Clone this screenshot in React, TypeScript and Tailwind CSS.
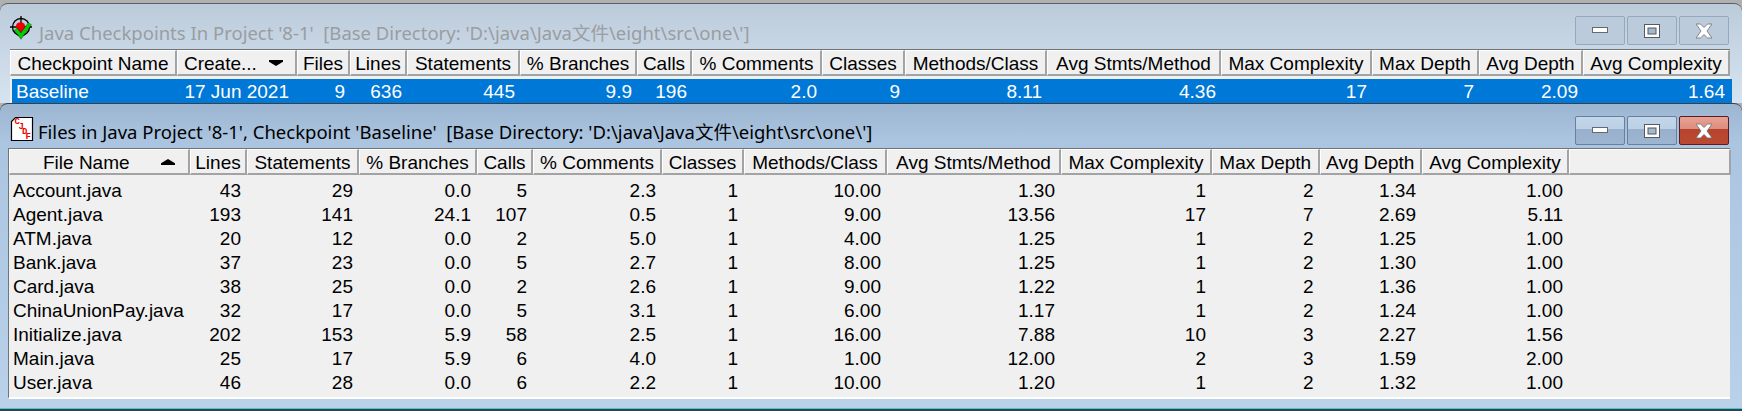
// Java checkpoint metrics windows
const cpCols = 'grid-cols-[167px_120px_53px_57px_113px_117px_55px_130px_83px_142px_174px_151px_107px_104px_147px]';
const fileCols = 'grid-cols-[181px_57px_112px_118px_56px_129px_82px_143px_174px_151px_107.5px_102.5px_147px_162px]';

const cpHeaders = ['Checkpoint Name', 'Create...', 'Files', 'Lines', 'Statements', '% Branches', 'Calls', '% Comments', 'Classes', 'Methods/Class', 'Avg Stmts/Method', 'Max Complexity', 'Max Depth', 'Avg Depth', 'Avg Complexity'];
const cpRow = ['Baseline', '17 Jun 2021', '9', '636', '445', '9.9', '196', '2.0', '9', '8.11', '4.36', '17', '7', '2.09', '1.64'];

const fileHeaders = ['File Name', 'Lines', 'Statements', '% Branches', 'Calls', '% Comments', 'Classes', 'Methods/Class', 'Avg Stmts/Method', 'Max Complexity', 'Max Depth', 'Avg Depth', 'Avg Complexity', ''];
const fileRows = [
  ['Account.java', '43', '29', '0.0', '5', '2.3', '1', '10.00', '1.30', '1', '2', '1.34', '1.00'],
  ['Agent.java', '193', '141', '24.1', '107', '0.5', '1', '9.00', '13.56', '17', '7', '2.69', '5.11'],
  ['ATM.java', '20', '12', '0.0', '2', '5.0', '1', '4.00', '1.25', '1', '2', '1.25', '1.00'],
  ['Bank.java', '37', '23', '0.0', '5', '2.7', '1', '8.00', '1.25', '1', '2', '1.30', '1.00'],
  ['Card.java', '38', '25', '0.0', '2', '2.6', '1', '9.00', '1.22', '1', '2', '1.36', '1.00'],
  ['ChinaUnionPay.java', '32', '17', '0.0', '5', '3.1', '1', '6.00', '1.17', '1', '2', '1.24', '1.00'],
  ['Initialize.java', '202', '153', '5.9', '58', '2.5', '1', '16.00', '7.88', '10', '3', '2.27', '1.56'],
  ['Main.java', '25', '17', '5.9', '6', '4.0', '1', '1.00', '12.00', '2', '3', '1.59', '2.00'],
  ['User.java', '46', '28', '0.0', '6', '2.2', '1', '10.00', '1.20', '1', '2', '1.32', '1.00'],
];

function TargetIcon() {
  return (
    <svg width="24" height="26" viewBox="0 0 24 26" className="shrink-0">
      <circle cx="11" cy="11" r="8.5" fill="none" stroke="#000" strokeWidth="1.3" />
      <path d="M11 0V22M0 11H22" stroke="#000" strokeWidth="1.3" />
      <circle cx="10.5" cy="11" r="4.8" fill="#f00000" />
      <path d="M5.5 13L11 20L20 7.5" fill="none" stroke="#000" strokeWidth="4.6" strokeOpacity="0.55" />
      <path d="M5.5 13L11 20L20 7.5" fill="none" stroke="#00d000" strokeWidth="3.4" />
    </svg>
  );
}

function FileIcon() {
  return (
    <svg width="24" height="26" viewBox="0 0 24 26" className="shrink-0">
      <path d="M5.5 1.5H22.5V24.5H1.5V5.5Z" fill="#fff" stroke="#000" strokeWidth="1.2" />
      <g fill="#f00000" fontFamily="'Liberation Mono',monospace" fontSize="9" fontWeight="700">
        <text x="4.5" y="8">C</text>
        <text x="8.5" y="13">J</text>
        <text x="12" y="18">D</text>
        <text x="15.5" y="23">F</text>
      </g>
    </svg>
  );
}

function WinGlyph({ kind }: { kind: 'min' | 'max' | 'close' }) {
  if (kind === 'min') {
    return (
      <svg width="18" height="9" viewBox="0 0 18 9">
        <rect x="1.5" y="1.5" width="15" height="5" fill="#fff" stroke="#666a70" />
      </svg>
    );
  }
  if (kind === 'max') {
    return (
      <svg width="18" height="16" viewBox="0 0 18 16">
        <rect x="1.5" y="1.5" width="15" height="13" fill="#fff" stroke="#555a60" />
        <rect x="5" y="5" width="8" height="6" fill="#a5b8cd" stroke="#555a60" />
      </svg>
    );
  }
  return (
    <svg width="18" height="16" viewBox="0 0 18 16">
      <path d="M1 1H5.5L9 4.5L12.5 1H17L12 8L17 15H12.5L9 11.5L5.5 15H1L6 8Z" fill="#fff" stroke="#6c7076" strokeWidth="0.8" />
    </svg>
  );
}

function Buttons({ active }: { active: boolean }) {
  const base = 'h-[29px] flex items-center justify-center rounded-[2px] border';
  const plain = active
    ? 'border-[#67809f] bg-[linear-gradient(#c3d6ea_0%,#bcd0e6_45%,#98b0cc_46%,#9db5d0_100%)]'
    : 'border-[#94a8c0] bg-[#bccbdc]';
  const close = active
    ? 'border-[#5c1a22] bg-[linear-gradient(#e9a194_0%,#dc8d7e_45%,#b8432c_46%,#bb4a32_100%)]'
    : 'border-[#94a8c0] bg-[#bccbdc]';
  return (
    <div className="flex gap-[2px]">
      <div className={`${base} ${plain} w-[50px]`}><WinGlyph kind="min" /></div>
      <div className={`${base} ${plain} w-[50px]`}><WinGlyph kind="max" /></div>
      <div className={`${base} ${close} w-[50px]`}><WinGlyph kind="close" /></div>
    </div>
  );
}

function HeaderCell({ label, sort, align }: { label: string; sort?: 'up' | 'down'; align?: string }) {
  return (
    <div className={`relative h-[26px] flex items-center px-[6px] pt-[2px] whitespace-nowrap overflow-hidden border-t border-l border-white border-r-2 border-r-[#a3a3a3] border-b-2 border-b-[#a3a3a3] bg-[#f0f0f0] ${align ?? 'justify-end'}`}>
      {label}
      {sort === 'down' && <span className="absolute right-[12px] top-[9px] w-[14px] h-[6px] bg-black [clip-path:polygon(0_0,100%_0,100%_30%,50%_100%,0_30%)]" />}
      {sort === 'up' && <span className="absolute right-[13px] top-[9px] w-[14px] h-[6px] bg-black [clip-path:polygon(50%_0,100%_70%,100%_100%,0_100%,0_70%)]" />}
    </div>
  );
}

export default function App() {
  return (
    <div className="w-[1742px] h-[411px] overflow-hidden bg-[#b0b0b0] pt-[3px] flex flex-col text-[19px] leading-[24px] text-black font-['Liberation_Sans',Arial,sans-serif]">
      {/* Inactive checkpoints window */}
      <div className="h-[100px] shrink-0 rounded-t-[8px] border-t border-[#5a6068] bg-[linear-gradient(#bccbda,#d6e4f2)] overflow-hidden">
        <div className="h-[45px] pl-[10px] pr-[13px] pt-[12px] flex items-start">
          <TargetIcon />
          <span className="ml-[5px] mt-[4px] text-[18.5px] leading-[26px] whitespace-pre text-[#9a9da1] font-['Noto_Sans','Noto_Sans_CJK_SC',sans-serif]">
            {"Java Checkpoints In Project '8-1'  [Base Directory: 'D:\\java\\Java文件\\eight\\src\\one\\']"}
          </span>
          <div className="ml-auto"><Buttons active={false} /></div>
        </div>
        <div className="ml-[10px] mr-[12px] border-t border-[#70757a] bg-[#f0f0f0] h-[54px]">
          <div className={`grid ${cpCols}`}>
            {cpHeaders.map((h, i) => (
              <HeaderCell key={h} label={h} sort={i === 1 ? 'down' : undefined} align={i === 1 ? 'justify-start' : 'justify-center'} />
            ))}
          </div>
          <div className={`grid ${cpCols} mt-[3px] ml-[2px] -mr-[2px] h-[24px] pt-[1px] bg-[#0078d7] text-white`}>
            {cpRow.map((v, i) => (
              <div key={i} className={`whitespace-nowrap ${i === 0 ? 'pl-[4px]' : i === 1 ? 'text-right pr-[10px]' : 'text-right pr-[7px]'}`}>{v}</div>
            ))}
          </div>
        </div>
      </div>

      {/* Active files window */}
      <div className="flex-1 rounded-t-[8px] border-t border-[#3a4048] bg-[linear-gradient(#9cb5d1_0%,#abc5e1_12%,#b9d1e9_100%)] overflow-hidden flex flex-col">
        <div className="h-[44px] shrink-0 pl-[10px] pr-[13px] pt-[12px] flex items-start">
          <FileIcon />
          <span className="ml-[4px] mt-[3px] text-[18.5px] leading-[26px] whitespace-pre text-black font-['Noto_Sans','Noto_Sans_CJK_SC',sans-serif]">
            {"Files in Java Project '8-1', Checkpoint 'Baseline'  [Base Directory: 'D:\\java\\Java文件\\eight\\src\\one\\']"}
          </span>
          <div className="ml-auto"><Buttons active /></div>
        </div>
        <div className="ml-[8px] mr-[12px] h-[251px] shrink-0 border-t border-l border-[#70757a] border-b-2 border-b-white bg-[#f0f0f0]">
          <div className={`grid ${fileCols}`}>
            {fileHeaders.map((h, i) => (
              <HeaderCell key={i} label={h} sort={i === 0 ? 'up' : undefined} align={i === 0 ? 'justify-start pl-[33px]' : 'justify-center'} />
            ))}
          </div>
          <div className="pt-[4px]">
            {fileRows.map(r => (
              <div key={r[0]} className={`grid ${fileCols} h-[24px]`}>
                {r.map((v, i) => (
                  <div key={i} className={`whitespace-nowrap ${i === 0 ? 'pl-[4px]' : 'text-right pr-[6px]'}`}>{v}</div>
                ))}
              </div>
            ))}
          </div>
        </div>
        <div className="mt-auto h-[3px] shrink-0 border-t border-[#2fd0e0] bg-[#3a4048]" />
      </div>
    </div>
  );
}
